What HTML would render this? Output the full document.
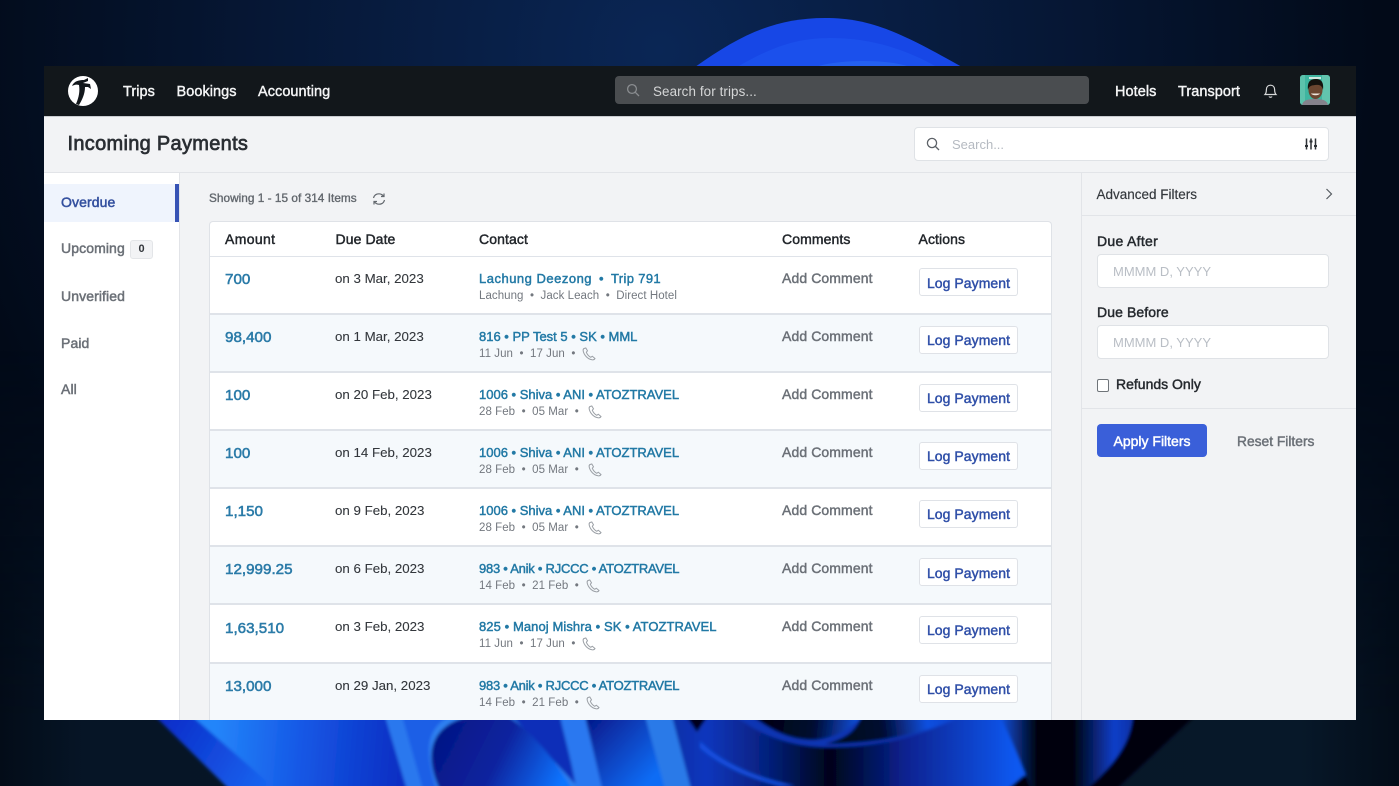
<!DOCTYPE html>
<html lang="en"><head><meta charset="utf-8"><title>Incoming Payments</title>
<style>
*{box-sizing:border-box}
html,body{margin:0;padding:0;width:1399px;height:786px;overflow:hidden;background:#030b18;font-family:"Liberation Sans",sans-serif}
#wall{position:absolute;left:0;top:0}
#app{position:absolute;left:44px;top:66px;width:1311.5px;height:654px;background:#f2f3f5;overflow:hidden}
#app div{position:absolute;white-space:nowrap}
.t{line-height:20px;font-size:14px}
.nav{top:15.5px;color:#f4f5f6;font-size:14.5px;letter-spacing:.05px;-webkit-text-stroke:.4px currentColor}
.side{left:17px;color:#6b7077;font-size:14px;letter-spacing:.1px;-webkit-text-stroke:.5px currentColor}
.th{top:163px;color:#22262b;font-size:14px;letter-spacing:.1px;-webkit-text-stroke:.45px currentColor}
.row{left:0;width:841px;height:58px;border-bottom:2px solid #dfe3e9;background:#fff}
.row.alt{background:#f5f9fc}
.amt{left:15px;top:13px;font-size:15.2px;color:#2b7ba8;letter-spacing:0;-webkit-text-stroke:.55px currentColor}
.date{left:125px;top:12px;font-size:13.3px;color:#33373c;-webkit-text-stroke:.1px currentColor}
.lnk{left:269px;top:12px;font-size:13px;color:#2279a5;-webkit-text-stroke:.45px currentColor}
.sub{left:269px;top:30px;font-size:11.5px;line-height:18px;color:#73787f;letter-spacing:.05px}
.cmt{left:572px;top:11px;font-size:14px;color:#6b7077;letter-spacing:.1px;-webkit-text-stroke:.45px currentColor}
.btn{left:709px;top:11px;width:99px;height:28px;background:#fff;border:1px solid #dfe2e7;border-radius:3px;text-align:center;line-height:27px;font-size:14px;color:#2f4fa8;letter-spacing:.05px;-webkit-text-stroke:.45px currentColor}
.inp{left:15px;width:232px;height:34px;background:#fff;border:1px solid #dfe2e6;border-radius:4px;color:#b9bec5;font-size:13px;line-height:34px;padding-left:15px}
.lab{left:15px;color:#25292e;font-size:14px;letter-spacing:.1px;-webkit-text-stroke:.45px currentColor}
</style></head><body>
<svg id="wall" width="1399" height="786" viewBox="0 0 1399 786" xmlns="http://www.w3.org/2000/svg">
<defs>
<radialGradient id="bg" gradientUnits="userSpaceOnUse" cx="660" cy="50" r="720"><stop offset="0" stop-color="#0a2655"/><stop offset=".55" stop-color="#061735"/><stop offset="1" stop-color="#020a18"/></radialGradient>
<linearGradient id="low" gradientUnits="userSpaceOnUse" x1="0" y1="0" x2="1399" y2="0"><stop offset="0" stop-color="#030c18"/><stop offset=".06" stop-color="#061526"/><stop offset=".93" stop-color="#071829"/><stop offset="1" stop-color="#030c18"/></linearGradient>
<linearGradient id="vf" gradientUnits="userSpaceOnUse" x1="0" y1="350" x2="0" y2="720"><stop offset="0" stop-color="#000"/><stop offset="1" stop-color="#fff"/></linearGradient>
<mask id="fade" maskUnits="userSpaceOnUse" x="0" y="0" width="1399" height="786"><rect width="1399" height="786" fill="url(#vf)"/></mask>
<filter id="soft" filterUnits="userSpaceOnUse" x="100" y="680" width="1200" height="140"><feGaussianBlur stdDeviation="1.6"/></filter>
<linearGradient id="wide" gradientUnits="userSpaceOnUse" x1="215" y1="740" x2="400" y2="755"><stop offset="0" stop-color="#2385fa"/><stop offset=".45" stop-color="#1659e6"/><stop offset="1" stop-color="#0a2fc4"/></linearGradient>
<linearGradient id="edge" gradientUnits="userSpaceOnUse" x1="160" y1="720" x2="270" y2="786"><stop offset="0" stop-color="#0a2bc8"/><stop offset="1" stop-color="#1a66f0"/></linearGradient>
<linearGradient id="arch" gradientUnits="userSpaceOnUse" x1="440" y1="725" x2="560" y2="785"><stop offset="0" stop-color="#061585"/><stop offset=".5" stop-color="#08249f"/><stop offset="1" stop-color="#0a74ff"/></linearGradient>
<linearGradient id="st" gradientUnits="userSpaceOnUse" x1="585" y1="720" x2="650" y2="780"><stop offset="0" stop-color="#06188a"/><stop offset="1" stop-color="#0a6cf5"/></linearGradient>
<linearGradient id="mid" gradientUnits="userSpaceOnUse" x1="672" y1="770" x2="1015" y2="770"><stop offset="0" stop-color="#0a2fa8"/><stop offset=".1" stop-color="#0a36bd"/><stop offset=".28" stop-color="#06207c"/><stop offset=".46" stop-color="#01041a"/><stop offset=".68" stop-color="#082290"/><stop offset="1" stop-color="#1058f0"/></linearGradient>
<linearGradient id="w1" gradientUnits="userSpaceOnUse" x1="755" y1="722" x2="860" y2="735"><stop offset="0" stop-color="#01030f"/><stop offset=".55" stop-color="#020a30"/><stop offset="1" stop-color="#0d55e8"/></linearGradient>
<linearGradient id="w2" gradientUnits="userSpaceOnUse" x1="830" y1="740" x2="960" y2="722"><stop offset="0" stop-color="#020818"/><stop offset=".4" stop-color="#020a30"/><stop offset=".75" stop-color="#1050e0"/><stop offset="1" stop-color="#0c3fc8"/></linearGradient>
<linearGradient id="rt" gradientUnits="userSpaceOnUse" x1="1000" y1="0" x2="1190" y2="0"><stop offset="0" stop-color="#0e50e0"/><stop offset=".2" stop-color="#01020a"/><stop offset=".38" stop-color="#01020a"/><stop offset=".6" stop-color="#0c3ec8"/><stop offset=".72" stop-color="#0a2fa0"/><stop offset=".76" stop-color="#01020a"/><stop offset="1" stop-color="#01020a"/></linearGradient>
</defs>
<rect width="1399" height="786" fill="url(#bg)"/>
<rect width="1399" height="786" fill="url(#low)" mask="url(#fade)"/>
<path d="M695 67C740 35 775 18 825 18C870 18 900 32 962 67Z" fill="#1747e6"/>
<path d="M737 67C770 48 795 38 830 38C865 38 900 46 937 67Z" fill="#1b50ec"/>
<path d="M815 67C835 60 885 58 910 67Z" fill="#2460f0"/>
<g filter="url(#soft)">
<path d="M155 716H1195L1105 800H240Z" fill="#0a2fb8"/>
<path d="M155 716H200L290 800H240Z" fill="url(#edge)"/>
<path d="M192 716H385L410 800H288Z" fill="url(#wide)"/>
<path d="M385 716H450L441 800H410Z" fill="#1c5ee6"/>
<path d="M385 716H402L426 800H410Z" fill="#2a78ee"/>
<path d="M450 716H512L590 800H440C424 755 424 730 450 716Z" fill="#2f80f0"/>
<path d="M470 716H508C535 735 560 765 578 800H445C420 755 430 725 470 716Z" fill="url(#arch)"/>
<path d="M560 716H585L605 800H578C572 760 565 740 560 716Z" fill="#2a78f0"/>
<path d="M585 716H645L670 800H605Z" fill="url(#st)"/>
<path d="M645 716H672L694 800H668Z" fill="#2a7ae8"/>
<path d="M672 716L694 800H1110V716Z" fill="url(#mid)"/>
<path d="M686 716H708L697 732Z" fill="#01041a"/>
<path d="M700 741C720 762 755 778 795 786H780C745 777 720 765 700 748Z" fill="#1350e0"/>
<path d="M735 716C760 735 790 746 823 747C880 748 925 735 963 716Z" fill="#0a34b4"/>
<path d="M752 716C775 733 792 740 815 740C835 738 850 730 862 716Z" fill="url(#w1)"/>
<path d="M862 716H963C930 732 880 744 825 744C850 737 855 730 862 716Z" fill="url(#w2)"/>
<path d="M1023 776L995 800H1040L1050 770Z" fill="#01020a"/>
<path d="M1000 716H1195C1165 745 1135 765 1105 800H1035C1020 760 1012 740 1000 716Z" fill="url(#rt)"/>
<path d="M1195 716L1105 800H1075C1115 765 1130 745 1133 716Z" fill="#01020a"/>
</g>
</svg>
<div id="app">
<div style="left:0;top:0;width:1312px;height:50px;background:#12171b"></div>
<svg style="position:absolute;left:23px;top:9px" width="32" height="32" viewBox="0 0 32 32"><circle cx="16" cy="16" r="15" fill="#fff"/><path d="M5 11C7 6 12 5 17 5L21 3L21 6L16 8L23 9L24 14L21 12L18 12C18 19 15 25 12 30L9 29C12 22 13 16 12 10C9 9 7 10 5 11Z" fill="#12171b"/></svg>
<div class="t nav" style="left:79px">Trips</div><div class="t nav" style="left:132.5px">Bookings</div><div class="t nav" style="left:214px">Accounting</div>
<div style="left:571px;top:10px;width:474px;height:28px;background:#4a4d50;border-radius:4px"></div>
<svg style="position:absolute;left:582px;top:17px" width="14" height="14" viewBox="0 0 14 14" fill="none" stroke="#8a8d90" stroke-width="1.3"><circle cx="6" cy="6" r="4.4"/><path d="M9.4 9.4L13 13"/></svg>
<div class="t" style="left:609px;top:15.5px;color:#d5d6d7;font-size:13.4px;letter-spacing:.1px">Search for trips...</div>
<div class="t nav" style="left:1071px">Hotels</div><div class="t nav" style="left:1134px">Transport</div>
<svg style="position:absolute;left:1219px;top:17px" width="15" height="16" viewBox="0 0 15 16" fill="none" stroke="#d8d9da" stroke-width="1.2"><path d="M2 11.5C3.4 10 3.3 8.5 3.4 6.5C3.5 3.8 5.2 2.2 7.5 2.2S11.500 3.800 11.600 6.500C11.700 8.500 11.600 10 13 11.500Z"/><path d="M6 13.500C6.500 14.500 8.500 14.500 9 13.500"/></svg>
<svg style="position:absolute;left:1256px;top:9px" width="30" height="30" viewBox="0 0 30 30"><defs><clipPath id="av"><rect width="30" height="30" rx="3"/></clipPath></defs><g clip-path="url(#av)"><rect width="30" height="30" fill="#3fb5a0"/><rect x="22" width="8" height="30" fill="#62c4ae"/><rect width="5" height="30" fill="#5cc2ac"/><path d="M9 2H21V4H9Z" fill="#cfe8e0"/><path d="M2 30C3 25 8 24 15 24S27 25 28 30Z" fill="#85828c"/><ellipse cx="15.500" cy="15" rx="7" ry="9" fill="#6b4630"/><path d="M8 15C7 6 11 4 16 4S24 7 23 15C22 10 19 9.500 15 10S9 11 8 15Z" fill="#14120e"/><path d="M11 18.500H20C19 20.800 12 20.800 11 18.500Z" fill="#eee5dc"/></g></svg>
<div style="left:0;top:50px;width:1312px;height:57px;border-bottom:1px solid #e2e4e8;border-top:1px solid #c9ccd1"></div>
<div class="t" style="left:23.500px;top:68px;font-size:20px;line-height:20px;color:#2a2e33;letter-spacing:.3px;-webkit-text-stroke:.7px currentColor">Incoming Payments</div>
<div style="left:870px;top:61px;width:415px;height:34px;background:#fff;border:1px solid #dfe2e6;border-radius:4px"></div>
<svg style="position:absolute;left:882px;top:71px" width="14" height="14" viewBox="0 0 14 14" fill="none" stroke="#5d6268" stroke-width="1.300"><circle cx="6" cy="6" r="4.600"/><path d="M9.500 9.500L13 13"/></svg>
<div class="t" style="left:908px;top:69px;color:#b5bac1;font-size:13px">Search...</div>
<svg style="position:absolute;left:1260px;top:71px" width="14" height="14" viewBox="0 0 14 14" fill="none" stroke="#2d3135" stroke-width="1.500"><path d="M2.500 1.500V12.500M7 1.500V12.500M11.500 1.500V12.500"/><path d="M1 9H4M5.500 4.500H8.500M10 9H13" stroke-width="2"/></svg>

<div style="left:0;top:107px;width:136px;height:547px;background:#fff;border-right:1px solid #e2e4e8"></div>
<div style="left:0;top:118px;width:135px;height:38px;background:#eff4fd"></div>
<div style="left:131px;top:118px;width:4px;height:38px;background:#3653b5"></div>
<div class="t side" style="top:126px;color:#34509f">Overdue</div>
<div class="t side" style="top:172px">Upcoming</div>
<div style="left:86px;top:174px;width:23px;height:19px;background:#f2f3f5;border:1px solid #e3e5e8;border-radius:3px;text-align:center;font-size:11px;line-height:17px;color:#33373c;font-weight:bold">0</div>
<div class="t side" style="top:220px">Unverified</div>
<div class="t side" style="top:267px">Paid</div>
<div class="t side" style="top:313px">All</div>

<div class="t" style="left:165px;top:122px;font-size:11.8px;color:#62676d;letter-spacing:.03px;-webkit-text-stroke:.35px currentColor">Showing 1 - 15 of 314 Items</div>
<svg style="position:absolute;left:328px;top:126px" width="14" height="14" viewBox="0 0 14 14" fill="none" stroke="#62676d" stroke-width="1.200"><path d="M1.500 6C2.200 3.300 4.300 1.800 7 1.800C9 1.800 10.500 2.800 11.500 4.200M12.500 8C11.800 10.700 9.700 12.200 7 12.200C5 12.200 3.500 11.200 2.500 9.800"/><path d="M12 1.500V4.500H9M2 12.500V9.500H5"/></svg>

<div style="left:165px;top:155px;width:843px;height:499px;background:#fff;border:1px solid #dfe2e7;border-bottom:0;border-radius:4px 4px 0 0;overflow:hidden"></div>
<div class="t th" style="left:181px;letter-spacing:.35px">Amount</div><div class="t th" style="left:291.500px">Due Date</div><div class="t th" style="left:435px">Contact</div><div class="t th" style="left:738px">Comments</div><div class="t th" style="left:874.500px">Actions</div>
<div style="left:166px;top:190px;width:841px;height:1px;background:#dfe3e9"></div>

<div style="left:166px;top:191px;width:841px;height:463px;overflow:hidden">
<div class="row" style="top:0"><div class="t amt">700</div><div class="t date">on 3 Mar, 2023</div><div class="t lnk" style="letter-spacing:.5px">Lachung Deezong</div><div class="t lnk" style="left:389px">•</div><div class="t lnk" style="left:401px;letter-spacing:.35px">Trip 791</div><div class="sub">Lachung &nbsp;•&nbsp; Jack Leach &nbsp;•&nbsp; Direct Hotel</div><div class="t cmt">Add Comment</div><div class="btn" style="line-height:28px">Log Payment</div></div>

<div class="row alt" style="top:58px"><div class="t amt">98,400</div><div class="t date" style="top:11.500px">on 1 Mar, 2023</div><div class="t lnk" style="top:11.500px">816 • PP Test 5 • SK • MML</div><div class="sub">11 Jun &nbsp;•&nbsp; 17 Jun &nbsp;•</div><svg style="position:absolute;left:372px;top:32px" width="14" height="14" viewBox="0 0 14 14" fill="none" stroke="#9ba0a6" stroke-width="1"><path d="M2 1.500C1 2 1 3 1.200 4C2 8 5.500 12 10 12.800C11.500 13 12.500 12.500 13 11.500L10.300 9.200L8.800 10.300C6.800 9.300 5 7 4.300 5.200L5.500 3.800L3.800 1Z"/></svg><div class="t cmt">Add Comment</div><div class="btn">Log Payment</div></div>

<div class="row" style="top:116px"><div class="t amt">100</div><div class="t date">on 20 Feb, 2023</div><div class="t lnk">1006 • Shiva • ANI • ATOZTRAVEL</div><div class="sub">28 Feb &nbsp;•&nbsp; 05 Mar &nbsp;•</div><svg style="position:absolute;left:378px;top:32px" width="14" height="14" viewBox="0 0 14 14" fill="none" stroke="#9ba0a6" stroke-width="1"><path d="M2 1.500C1 2 1 3 1.200 4C2 8 5.500 12 10 12.800C11.500 13 12.500 12.500 13 11.500L10.300 9.200L8.800 10.300C6.800 9.300 5 7 4.300 5.200L5.500 3.800L3.800 1Z"/></svg><div class="t cmt">Add Comment</div><div class="btn">Log Payment</div></div>

<div class="row alt" style="top:174px"><div class="t amt">100</div><div class="t date">on 14 Feb, 2023</div><div class="t lnk">1006 • Shiva • ANI • ATOZTRAVEL</div><div class="sub">28 Feb &nbsp;•&nbsp; 05 Mar &nbsp;•</div><svg style="position:absolute;left:378px;top:32px" width="14" height="14" viewBox="0 0 14 14" fill="none" stroke="#9ba0a6" stroke-width="1"><path d="M2 1.500C1 2 1 3 1.200 4C2 8 5.500 12 10 12.800C11.500 13 12.500 12.500 13 11.500L10.300 9.200L8.800 10.300C6.800 9.300 5 7 4.300 5.200L5.500 3.800L3.800 1Z"/></svg><div class="t cmt">Add Comment</div><div class="btn">Log Payment</div></div>

<div class="row" style="top:232px"><div class="t amt">1,150</div><div class="t date">on 9 Feb, 2023</div><div class="t lnk">1006 • Shiva • ANI • ATOZTRAVEL</div><div class="sub">28 Feb &nbsp;•&nbsp; 05 Mar &nbsp;•</div><svg style="position:absolute;left:378px;top:32px" width="14" height="14" viewBox="0 0 14 14" fill="none" stroke="#9ba0a6" stroke-width="1"><path d="M2 1.500C1 2 1 3 1.200 4C2 8 5.500 12 10 12.800C11.500 13 12.500 12.500 13 11.500L10.300 9.200L8.800 10.300C6.800 9.300 5 7 4.300 5.200L5.500 3.800L3.800 1Z"/></svg><div class="t cmt">Add Comment</div><div class="btn">Log Payment</div></div>

<div class="row alt" style="top:290px"><div class="t amt">12,999.25</div><div class="t date">on 6 Feb, 2023</div><div class="t lnk" style="letter-spacing:-.25px">983 • Anik • RJCCC • ATOZTRAVEL</div><div class="sub">14 Feb &nbsp;•&nbsp; 21 Feb &nbsp;•</div><svg style="position:absolute;left:376px;top:32px" width="14" height="14" viewBox="0 0 14 14" fill="none" stroke="#9ba0a6" stroke-width="1"><path d="M2 1.500C1 2 1 3 1.200 4C2 8 5.500 12 10 12.800C11.500 13 12.500 12.500 13 11.500L10.300 9.200L8.800 10.300C6.800 9.300 5 7 4.300 5.200L5.500 3.800L3.800 1Z"/></svg><div class="t cmt">Add Comment</div><div class="btn" style="line-height:28px">Log Payment</div></div>

<div class="row" style="top:348px;height:59px"><div class="t amt" style="top:14px">1,63,510</div><div class="t date" style="top:12px">on 3 Feb, 2023</div><div class="t lnk" style="top:12px;letter-spacing:.08px">825 • Manoj Mishra • SK • ATOZTRAVEL</div><div class="sub">11 Jun &nbsp;•&nbsp; 17 Jun &nbsp;•</div><svg style="position:absolute;left:372px;top:32px" width="14" height="14" viewBox="0 0 14 14" fill="none" stroke="#9ba0a6" stroke-width="1"><path d="M2 1.500C1 2 1 3 1.200 4C2 8 5.500 12 10 12.800C11.500 13 12.500 12.500 13 11.500L10.300 9.200L8.800 10.300C6.800 9.300 5 7 4.300 5.200L5.500 3.800L3.800 1Z"/></svg><div class="t cmt">Add Comment</div><div class="btn">Log Payment</div></div>

<div class="row alt" style="top:407px"><div class="t amt">13,000</div><div class="t date">on 29 Jan, 2023</div><div class="t lnk" style="letter-spacing:-.25px">983 • Anik • RJCCC • ATOZTRAVEL</div><div class="sub">14 Feb &nbsp;•&nbsp; 21 Feb &nbsp;•</div><svg style="position:absolute;left:376px;top:32px" width="14" height="14" viewBox="0 0 14 14" fill="none" stroke="#9ba0a6" stroke-width="1"><path d="M2 1.500C1 2 1 3 1.200 4C2 8 5.500 12 10 12.800C11.500 13 12.500 12.500 13 11.500L10.300 9.200L8.800 10.300C6.800 9.300 5 7 4.300 5.200L5.500 3.800L3.800 1Z"/></svg><div class="t cmt">Add Comment</div><div class="btn">Log Payment</div></div>
</div>

<div style="left:1037px;top:107px;width:275px;height:547px;background:#f2f3f5;border-left:1px solid #e2e4e8">
<div class="t" style="left:14.500px;top:11.500px;color:#33373c;font-size:13.5px;-webkit-text-stroke:.15px currentColor">Advanced Filters</div>
<svg style="position:absolute;left:242px;top:15px" width="10" height="12" viewBox="0 0 10 12" fill="none" stroke="#555a60" stroke-width="1.200"><path d="M2.500 1L7.500 6L2.500 11"/></svg>
<div style="left:0;top:42px;width:275px;height:1px;background:#e2e4e8"></div>
<div class="t lab" style="top:58px;letter-spacing:.3px">Due After</div>
<div class="inp" style="top:81px">MMMM D, YYYY</div>
<div class="t lab" style="top:129px">Due Before</div>
<div class="inp" style="top:152px">MMMM D, YYYY</div>
<div style="left:15px;top:206px;width:12px;height:13px;background:#fff;border:1px solid #6f7479;border-radius:2px"></div>
<div class="t lab" style="left:34px;top:201px;letter-spacing:0">Refunds Only</div>
<div style="left:0;top:235px;width:275px;height:1px;background:#e2e4e8"></div>
<div style="left:15px;top:251px;width:110px;height:33px;background:#3a5fd9;border-radius:4px;text-align:center;line-height:34px;color:#fff;font-size:14px;-webkit-text-stroke:.45px currentColor">Apply Filters</div>
<div class="t" style="left:155px;top:258.500px;color:#6b7077;font-size:13.8px;-webkit-text-stroke:.45px currentColor">Reset Filters</div>
</div>
</div>
</body></html>
